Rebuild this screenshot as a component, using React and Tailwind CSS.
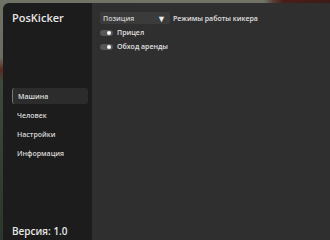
import React, { useState } from "react";

const tabs = ["Машина", "Человек", "Настройки", "Информация"];

function Toggle({ on }) {
  return (
    <div className="w-[13px] h-[6px] rounded-full bg-[#575757] relative">
      <div
        className={`absolute top-[1px] w-[4px] h-[4px] rounded-full bg-white ${
          on ? "right-[2px]" : "left-[1px]"
        }`}
      ></div>
    </div>
  );
}

export default function App() {
  const [active, setActive] = useState(0);

  return (
    <div
      className="w-[330px] h-[240px] flex flex-col bg-[linear-gradient(180deg,#6f7366_0%,#6a6c60_24%,#5b2a20_29%,#3d4a3a_34%,#2c362c_100%)]"
      style={{ fontFamily: '"Open Sans", "Noto Sans", sans-serif' }}
    >
      <div className="h-[3px] shrink-0 bg-[linear-gradient(90deg,#6f7366_0%,#707366_80%,#5a3a33_83%,#4a1e17_86%,#3d1b16_100%)]"></div>
      <div className="flex flex-1 ml-[3px] rounded-tl-[6px] overflow-hidden">
        <div className="w-[89px] bg-[#1c1c1c] flex flex-col pl-[9px] pr-[4px] pt-[8px] pb-[4px]">
          <div className="text-[11px] font-semibold text-[#e6e6e6] leading-none pt-[1px]">
            PosKicker
          </div>
          <div className="mt-[65px] flex flex-col gap-[3px]">
            {tabs.map((t, i) => (
              <button
                key={t}
                onClick={() => setActive(i)}
                className={`h-[16px] text-left pl-[5px] text-[7px] font-semibold leading-none rounded-[3px] ${
                  i === active
                    ? "bg-[#2c2c2c] text-[#dcdcdc] border-l border-[#777777]"
                    : "text-[#d8d8d8]"
                }`}
              >
                {t}
              </button>
            ))}
          </div>
          <div className="mt-auto text-[10px] font-semibold text-[#e6e6e6] leading-none">
            Версия: 1.0
          </div>
        </div>
        <div className="flex-1 bg-[#2f2f2f] pl-[8px] pt-[9px]">
          <div className="flex items-center gap-[3px]">
            <div className="w-[70px] h-[12px] bg-[#3b3b3b] rounded-[2px] flex items-center justify-between pl-[3px] pr-[4px]">
              <span className="text-[7px] font-semibold text-[#cfcfcf] leading-none">
                Позиция
              </span>
              <span className="text-[9px] text-[#ececec] leading-none">▼</span>
            </div>
            <span className="text-[7px] font-semibold text-[#e0e0e0] leading-none">
              Режимы работы кикера
            </span>
          </div>
          <div className="mt-[5px] flex items-center gap-[4px]">
            <Toggle on />
            <span className="text-[7px] font-semibold text-[#e0e0e0] leading-none">
              Прицел
            </span>
          </div>
          <div className="mt-[7px] flex items-center gap-[4px]">
            <Toggle on />
            <span className="text-[7px] font-semibold text-[#e0e0e0] leading-none">
              Обход аренды
            </span>
          </div>
        </div>
      </div>
    </div>
  );
}
